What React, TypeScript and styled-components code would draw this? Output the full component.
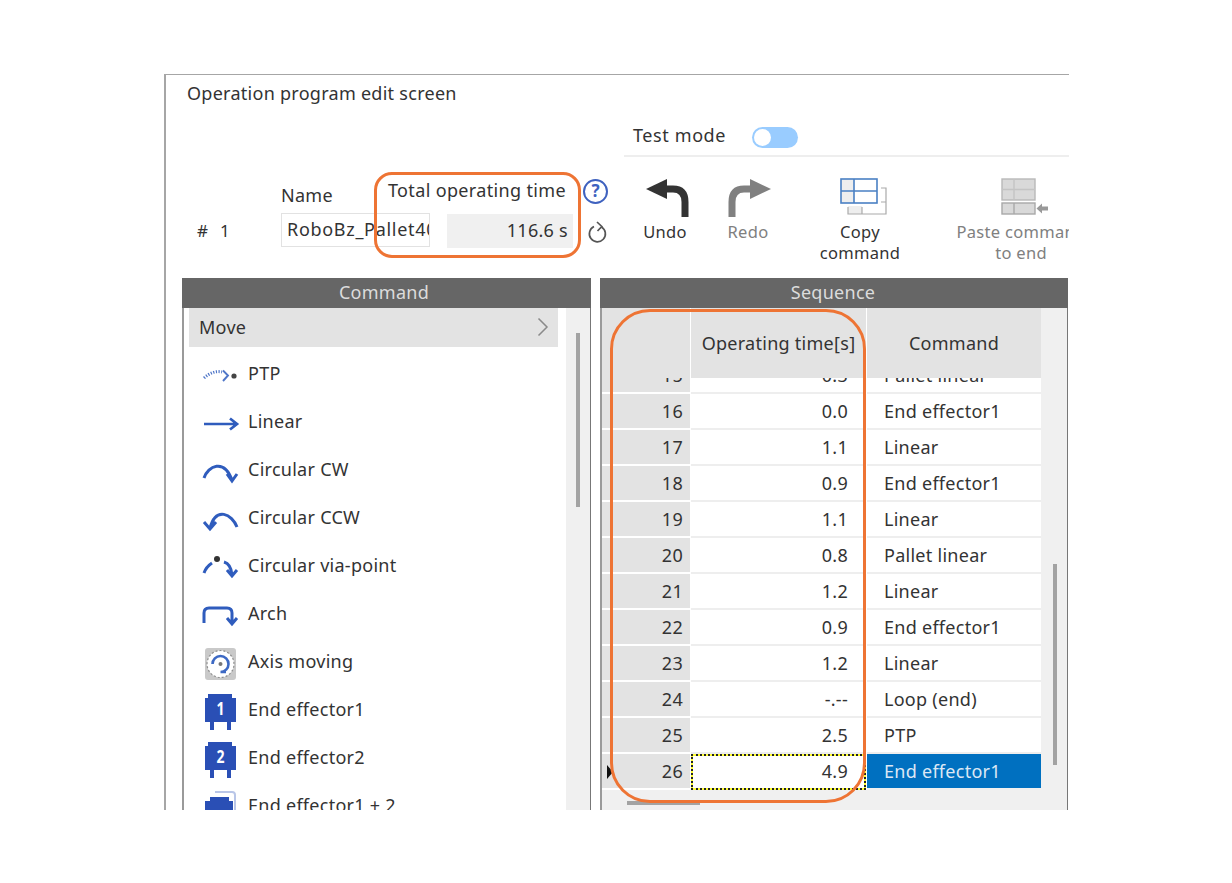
import React from "react";
import styled, { createGlobalStyle } from "styled-components";

const Global = createGlobalStyle`
  html, body { margin: 0; padding: 0; background: #fff; }
  body { font-family: "Noto Sans", "Open Sans", Arial, sans-serif; color: #333; font-size: 18px; letter-spacing: 0.27px; }
  * { box-sizing: border-box; }
`;
const Page = styled.div`padding: 74px 0 0 164px; height: 883px; width: 1232px; overflow: hidden;`;
const Window = styled.div`
  position: relative; width: 905px; height: 736px; overflow: hidden;
  border-left: 2px solid #a6a6a6; border-top: 1px solid #a6a6a6;
`;
const Title = styled.div`height: 43px; padding: 6px 0 0 21px; line-height: 24px;`;
const TestBar = styled.div`
  margin-left: 458px; height: 39px; border-bottom: 2px solid #eee; letter-spacing: 0.6px;
  display: flex; align-items: center; gap: 26px; padding: 0 0 4px 9px;
`;
const Toggle = styled.div`
  width: 46px; height: 21px; border-radius: 11px; background: #99ccff; padding: 2px;
  display: flex; align-items: center; margin-top: 5px;
`;
const Knob = styled.div`width: 17px; height: 17px; border-radius: 50%; background: #fff;`;
const Toolbar = styled.div`display: flex; height: 121px; padding: 21px 0 0 31px;`;
const Identity = styled.div`
  display: grid; flex: none; width: 429px;
  grid-template-columns: 84px 107px 59px 126px 10px 42px;
  grid-template-rows: 35px 36px;
`;
const Hash = styled.div`grid-column: 1; grid-row: 2; align-self: center; word-spacing: 7px; font-size: 17px; padding-bottom: 1px;`;
const NameLabel = styled.div`grid-column: 2; grid-row: 1; align-self: end; line-height: 24px; padding-bottom: 6px;`;
const TotalLabel = styled.div`grid-column: 2 / 5; grid-row: 1; justify-self: end; margin-right: 7px; line-height: 24px; letter-spacing: 0.35px;`;
const NameInput = styled.div`
  grid-column: 2 / 4; grid-row: 2; width: 149px; height: 34px; border: 1px solid #e2e2e2;
  padding: 0 0 0 5px; line-height: 30px; overflow: hidden; white-space: nowrap; letter-spacing: 0.7px;
`;
const TimeValue = styled.div`
  grid-column: 4; grid-row: 2; height: 34px; margin-top: 1px; background: #f0f0f0; text-align: right;
  padding-right: 5px; line-height: 32px;
`;
const HelpSlot = styled.div`grid-column: 6; grid-row: 1; margin-top: 1px;`;
const ReloadSlot = styled.div`grid-column: 6; grid-row: 2; padding: 7px 0 0 2px;`;
const HelpCircle = styled.div`
  width: 25px; height: 25px; border-radius: 50%; border: 2px solid #3f62bf; color: #3f62bf;
  font-size: 17px; font-weight: 700; text-align: center; line-height: 20px; letter-spacing: 0;
`;
const Tool = styled.div<{ $w: number; $dim?: boolean }>`
  flex: none; width: ${(p) => p.$w}px; text-align: center; line-height: 21px; font-size: 16.5px; letter-spacing: 0.3px;
  color: ${(p) => (p.$dim ? "#808080" : "#333")};
`;
const ToolIcon = styled.div<{ $nudge: number }>`
  height: 43px; display: flex; justify-content: center; align-items: flex-start;
  padding-left: ${(p) => p.$nudge * 2}px;
  svg { display: block; flex: none; }
`;
const Panels = styled.div`display: flex; gap: 9px; padding-left: 16px;`;
const Panel = styled.div<{ $w: number }>`flex: none; width: ${(p) => p.$w}px;`;
const PanelHead = styled.div<{ $inset: number }>`
  height: 30px; background: #666; color: #dcdcdc; text-align: center; line-height: 29px; padding-right: ${(p) => p.$inset}px;
`;
const PanelBody = styled.div`
  display: flex; height: 502px; border-left: 2px solid #9a9a9a; border-right: 1px solid #777;
`;
const List = styled.div`flex: 1; padding-left: 5px; overflow: hidden; background: #fff;`;
const MoveRow = styled.div`
  width: 369px; height: 39px; background: #e3e3e3; display: flex; align-items: center;
  justify-content: space-between; padding: 0 9px 2px 10px; margin-bottom: 3px;
`;
const Item = styled.div`
  height: 48px; display: flex; align-items: center; gap: 10px; padding-left: 13px; line-height: 24px; white-space: nowrap;
  svg { flex: none; display: block; overflow: visible; }
`;
const ItemText = styled.span`margin-top: -2px;`;
const Gutter = styled.div<{ $w: number }>`flex: none; width: ${(p) => p.$w}px; background: #f0f0f0;`;
const VThumb = styled.div<{ $top: number; $left: number; $h: number }>`
  width: 4px; height: ${(p) => p.$h}px; margin: ${(p) => p.$top}px 0 0 ${(p) => p.$left}px; background: #a3a3a3;
`;
const Table = styled.div`flex: none; width: 439px; background: #f0f0f0;`;
const HeadRow = styled.div`
  display: grid; grid-template-columns: 88px 175px 174px; gap: 1px; height: 70px; background: #fff;
`;
const HeadCell = styled.div`
  background: #e3e3e3; display: flex; align-items: center; justify-content: center; padding-bottom: 1px; white-space: nowrap;
`;
const Rows = styled.div`height: 412px; overflow: hidden; background: #fff;`;
const RowsInner = styled.div`margin-top: -20px;`;
const Row = styled.div`
  display: grid; grid-template-columns: 88px 175px 174px; column-gap: 1px; height: 36px; background: #fff; position: relative;
`;
const NumCell = styled.div`
  background: #e3e3e3; border-bottom: 2px solid #fff; text-align: right; padding-right: 7px; line-height: 34px;
`;
const TimeCell = styled.div<{ $active?: boolean }>`
  border-bottom: 2px solid #eee; text-align: right; padding-right: 18px; line-height: 34px;
  ${(p) => p.$active && `
    border: 2px dotted #222;
    background: linear-gradient(#fff, #fff) padding-box, #ffff33 border-box;
    padding-right: 16px; line-height: 31px;
  `}
`;
const CmdCell = styled.div<{ $active?: boolean }>`
  border-bottom: 2px solid ${(p) => (p.$active ? "#f0f0f0" : "#eee")}; padding-left: 17px; line-height: 34px; white-space: nowrap;
  background: ${(p) => (p.$active ? "#0070c0" : "#fff")}; color: ${(p) => (p.$active ? "#dce8f5" : "#333")};
`;
const Pointer = styled.div`
  position: absolute; left: 5px; top: 11px; width: 0; height: 0;
  border-left: 6px solid #111; border-top: 7px solid transparent; border-bottom: 7px solid transparent;
`;
const HThumb = styled.div`width: 73px; height: 4px; margin: 11px 0 0 25px; background: #a3a3a3;`;
const Callout = styled.div<{ $l: number; $t: number; $w: number; $h: number; $r: number }>`
  position: absolute; left: ${(p) => p.$l}px; top: ${(p) => p.$t}px; width: ${(p) => p.$w}px; height: ${(p) => p.$h}px;
  border: 3.4px solid #ee7434; border-radius: ${(p) => p.$r}px; pointer-events: none;
`;

const B = "#2f5cbd";
const S = ({ children, w = 36, h = 36 }: { children: React.ReactNode; w?: number; h?: number }) => (
  <svg width={w} height={h} viewBox={`0 0 ${w} ${h}`} fill="none">{children}</svg>
);
const Ptp = () => (
  <S>
    <path d="M2 22Q11 14 20 16" stroke="#4f76c8" strokeWidth="3" strokeDasharray="1.2 1.5" />
    <path d="M21 14.5L26 19.5L21 25" stroke="#4f76c8" strokeWidth="1.9" />
    <circle cx="32" cy="20" r="2.6" fill="#444" />
  </S>
);
const Linear = () => (
  <S><path d="M2 20H34M28 14.5L35 20L28 25.5" stroke={B} strokeWidth="2.7" /></S>
);
const Cw = () => (
  <S><path d="M2 26C6 14 22 6 30 28M25 22L30 29L35 22" stroke={B} strokeWidth="3" /></S>
);
const Ccw = () => (
  <S><path d="M35 27C30 14 14 6 8 28M2 22L8 29L14 22" stroke={B} strokeWidth="3" /></S>
);
const Via = () => (
  <S>
    <path d="M2 25Q4 19 10 15M22 14Q29 16 30 27M25 22L30 28L35 22" stroke={B} strokeWidth="3" />
    <circle cx="15" cy="11" r="3" fill="#333" />
  </S>
);
const Arch = () => (
  <S><path d="M2 27V17Q2 12 7 12H25Q30 12 30 17V27M25 22L30 28L35 22" stroke={B} strokeWidth="3" /></S>
);
const Axis = () => (
  <S>
    <rect x="3" y="4" width="31" height="32" rx="3" fill="#c9c9c9" />
    <circle cx="18.5" cy="20" r="13.5" fill="#fff" />
    <path d="M5 20A13.5 13.5 0 0 1 32 20A13.5 13.5 0 0 1 5 20" stroke="#8f8f8f" strokeWidth="1.2" strokeDasharray="2 2" />
    <path d="M10.5 20A8 8 0 1 1 18.5 28H24" stroke="#3d69c4" strokeWidth="2.6" />
    <circle cx="18.5" cy="20" r="2" fill="#777" />
  </S>
);
const Eff = ({ n }: { n: string }) => (
  <S>
    <g transform="translate(0 2)">
      <path d="M6 0H30V4H34V28H3V4H6Z" fill="#2a4fb5" />
      <rect x="8" y="28" width="4" height="8" fill="#2a4fb5" />
      <rect x="25" y="28" width="4" height="8" fill="#2a4fb5" />
      <text transform="translate(18.5 21) scale(.78 1)" textAnchor="middle" fill="#fff" fontSize="18" fontWeight="700" letterSpacing="0" fontFamily="'Noto Sans', sans-serif">{n}</text>
    </g>
  </S>
);
const EffBoth = () => (
  <S>
    <path d="M13 4H30Q33 4 33 7V24" stroke="#b9c6e8" strokeWidth="2" />
    <path d="M8 9H27V13H31V38H3V13H8Z" fill="#2a4fb5" />
  </S>
);
const Chevron = () => (
  <svg width="12" height="20" viewBox="0 0 12 20" fill="none"><path d="M1.5 1.5L10 10L1.5 18.5" stroke="#8a8a8a" strokeWidth="1.5" /></svg>
);
const Reload = () => (
  <svg width="24" height="24" viewBox="0 0 24 24" fill="none">
    <path d="M16.5 7A8 8 0 1 1 9 6.6" stroke="#555" strokeWidth="1.7" />
    <path d="M12 2L16.8 6.5L12.5 11" stroke="#555" strokeWidth="1.7" />
  </svg>
);
const Undo = () => (
  <svg width="46" height="40" viewBox="0 0 46 40" fill="none">
    <path d="M1 11L22 1V21Z" fill="#333" />
    <path d="M20 11H28Q40 11 40 24V39" stroke="#333" strokeWidth="7" />
  </svg>
);
const Redo = () => (
  <svg width="46" height="40" viewBox="0 0 46 40" fill="none">
    <path d="M45 11L24 1V21Z" fill="#808080" />
    <path d="M26 11H18Q6 11 6 24V39" stroke="#808080" strokeWidth="7" />
  </svg>
);
const Copy = () => (
  <svg width="48" height="37" viewBox="0 0 48 37" fill="none">
    <rect x="8" y="28" width="14" height="8" fill="#eee" />
    <path d="M41 10H46V36H8V29M22 29V36M41 24H46" stroke="#aaa" strokeWidth="1.2" />
    <rect x="1" y="1" width="13" height="12" fill="#eee" />
    <rect x="1" y="13" width="13" height="12" fill="#eee" />
    <rect x="1" y="1" width="36" height="24" stroke="#4a80c4" strokeWidth="1.6" />
    <path d="M14 1V25M1 13H37" stroke="#4a80c4" strokeWidth="1.6" />
  </svg>
);
const Paste = () => (
  <svg width="48" height="37" viewBox="0 0 48 37" fill="none">
    <rect x="1" y="1" width="33" height="21" fill="#d9d9d9" stroke="#b8b8b8" strokeWidth="1.4" />
    <path d="M13 1V22M1 11.5H34" stroke="#c4c4c4" strokeWidth="1.4" />
    <rect x="1" y="25" width="33" height="11" fill="#d9d9d9" stroke="#a8a8a8" strokeWidth="1.4" />
    <path d="M13 25V36" stroke="#a8a8a8" strokeWidth="1.4" />
    <path d="M35.5 30.5L41 25.5V28.5H47V32.5H41V35.5Z" fill="#999" />
  </svg>
);

const items: { label: string; icon: React.ReactNode }[] = [
  { label: "PTP", icon: <Ptp /> },
  { label: "Linear", icon: <Linear /> },
  { label: "Circular CW", icon: <Cw /> },
  { label: "Circular CCW", icon: <Ccw /> },
  { label: "Circular via-point", icon: <Via /> },
  { label: "Arch", icon: <Arch /> },
  { label: "Axis moving", icon: <Axis /> },
  { label: "End effector1", icon: <Eff n="1" /> },
  { label: "End effector2", icon: <Eff n="2" /> },
  { label: "End effector1 + 2", icon: <EffBoth /> },
];
const rows: [string, string, string][] = [
  ["15", "0.3", "Pallet linear"],
  ["16", "0.0", "End effector1"],
  ["17", "1.1", "Linear"],
  ["18", "0.9", "End effector1"],
  ["19", "1.1", "Linear"],
  ["20", "0.8", "Pallet linear"],
  ["21", "1.2", "Linear"],
  ["22", "0.9", "End effector1"],
  ["23", "1.2", "Linear"],
  ["24", "-.--", "Loop (end)"],
  ["25", "2.5", "PTP"],
  ["26", "4.9", "End effector1"],
];

export default function App() {
  return (
    <Page>
      <Global />
      <Window>
        <Title>Operation program edit screen</Title>
        <TestBar>
          <span>Test mode</span>
          <Toggle><Knob /></Toggle>
        </TestBar>
        <Toolbar>
          <Identity>
            <Hash># 1</Hash>
            <NameLabel>Name</NameLabel>
            <TotalLabel>Total operating time</TotalLabel>
            <NameInput>RoboBz_Pallet40</NameInput>
            <TimeValue>116.6 s</TimeValue>
            <HelpSlot><HelpCircle>?</HelpCircle></HelpSlot>
            <ReloadSlot><Reload /></ReloadSlot>
          </Identity>
          <Tool $w={78}><ToolIcon $nudge={3}><Undo /></ToolIcon>Undo</Tool>
          <Tool $w={88} $dim><ToolIcon $nudge={1}><Redo /></ToolIcon>Redo</Tool>
          <Tool $w={136}><ToolIcon $nudge={4}><Copy /></ToolIcon>Copy<br />command</Tool>
          <Tool $w={186} $dim><ToolIcon $nudge={4}><Paste /></ToolIcon>Paste command<br />to end</Tool>
        </Toolbar>
        <Panels>
          <Panel $w={409}>
            <PanelHead $inset={5}>Command</PanelHead>
            <PanelBody>
              <List>
                <MoveRow><span>Move</span><Chevron /></MoveRow>
                {items.map((it) => (
                  <Item key={it.label}>{it.icon}<ItemText>{it.label}</ItemText></Item>
                ))}
              </List>
              <Gutter $w={24}><VThumb $top={25} $left={10} $h={174} /></Gutter>
            </PanelBody>
          </Panel>
          <Panel $w={468}>
            <PanelHead $inset={2}>Sequence</PanelHead>
            <PanelBody>
              <Table>
                <HeadRow>
                  <HeadCell />
                  <HeadCell>Operating time[s]</HeadCell>
                  <HeadCell>Command</HeadCell>
                </HeadRow>
                <Rows>
                  <RowsInner>
                    {rows.map(([n, t, c], i) => {
                      const active = i === rows.length - 1;
                      return (
                        <Row key={n}>
                          {active && <Pointer />}
                          <NumCell>{n}</NumCell>
                          <TimeCell $active={active}>{t}</TimeCell>
                          <CmdCell $active={active}>{c}</CmdCell>
                        </Row>
                      );
                    })}
                  </RowsInner>
                </Rows>
                <HThumb />
              </Table>
              <Gutter $w={26}><VThumb $top={256} $left={12} $h={201} /></Gutter>
            </PanelBody>
          </Panel>
        </Panels>
        <Callout $l={208} $t={97} $w={207} $h={86} $r={18} />
        <Callout $l={444} $t={234} $w={256} $h={494} $r={40} />
      </Window>
    </Page>
  );
}
